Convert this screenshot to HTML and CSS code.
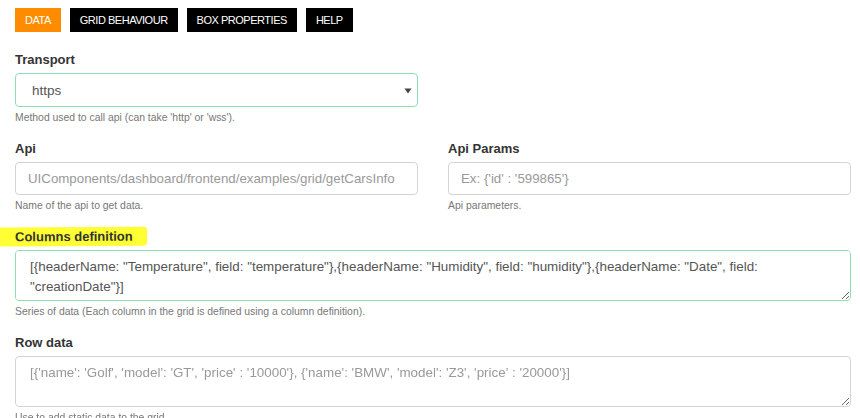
FILE: index.html
```html
<!DOCTYPE html>
<html>
<head>
<meta charset="utf-8">
<link rel="stylesheet" href="styles.css">
</head>
<body>
<div class="page">
  <nav class="tabs">
    <span class="tab tab-active">DATA</span>
    <span class="tab">GRID BEHAVIOUR</span>
    <span class="tab">BOX PROPERTIES</span>
    <span class="tab">HELP</span>
  </nav>

  <div class="group">
    <div class="label">Transport</div>
    <div class="control select focus">
      <span>https</span>
      <svg class="caret" width="8" height="6" viewBox="0 0 8 6"><path d="M0.5 0.5 H7.5 L4 5.5 Z" fill="#444"/></svg>
    </div>
    <div class="help">Method used to call api (can take 'http' or 'wss').</div>
  </div>

  <div class="row">
    <div class="group">
      <div class="label">Api</div>
      <input class="control" type="text" placeholder="UIComponents/dashboard/frontend/examples/grid/getCarsInfo">
      <div class="help">Name of the api to get data.</div>
    </div>
    <div class="group">
      <div class="label">Api Params</div>
      <input class="control" type="text" placeholder="Ex: {'id' : '599865'}">
      <div class="help">Api parameters.</div>
    </div>
  </div>

  <div class="group">
    <div class="label"><span class="marker">Columns definition</span></div>
    <textarea class="control area focus">[{headerName: "Temperature", field: "temperature"},{headerName: "Humidity", field: "humidity"},{headerName: "Date", field: "creationDate"}]</textarea>
    <div class="help">Series of data (Each column in the grid is defined using a column definition).</div>
  </div>

  <div class="group">
    <div class="label">Row data</div>
    <textarea class="control area" placeholder="[{'name': 'Golf', 'model': 'GT', 'price' : '10000'}, {'name': 'BMW', 'model': 'Z3', 'price' : '20000'}]"></textarea>
    <div class="help">Use to add static data to the grid.</div>
  </div>
</div>
</body>
</html>
```

FILE: styles.css
```css
* { box-sizing: border-box; }
html, body { margin: 0; padding: 0; background: #fff; overflow: hidden; }
body {
  font-family: "Liberation Sans", Arial, sans-serif;
  color: #333;
}
.page {
  width: 836px;
  margin-left: 15px;
  padding-top: 8px;
}
.tabs {
  display: flex;
  gap: 9px;
  margin-bottom: 18px;
}
.tab {
  height: 24px;
  line-height: 24px;
  padding: 0 10px;
  background: #000;
  color: #fff;
  font-size: 11px;
  letter-spacing: -0.48px;
}
.tab-active { background: #ff8c00; }

.group {
  display: flex;
  flex-direction: column;
  margin-bottom: 14px;
}
.row {
  display: grid;
  grid-template-columns: 403px 403px;
  column-gap: 30px;
}
.select { width: 403px; }

.label {
  font-size: 13px;
  font-weight: bold;
  line-height: 19px;
  margin-bottom: 4px;
  color: #333;
}
.marker {
  display: inline-block;
  margin-left: -15px;
  padding: 0 14px 0 15px;
  background: #ffff33;
  border-radius: 0 3px 4px 0;
  transform: rotate(-0.3deg);
}
.control {
  height: 33px;
  border: 1px solid #d4d4d4;
  border-radius: 4px;
  font-family: "Liberation Sans", Arial, sans-serif;
  font-size: 13.3px;
  color: #555;
  padding: 0 12px;
  outline: none;
  background: #fff;
}
.control::placeholder { color: #999; }
.focus { border-color: #8bdfb3; }
.select {
  display: flex;
  align-items: center;
  justify-content: space-between;
  padding: 0 5px 0 16px;
  height: 34px;
  font-size: 13.5px;
}
.caret { margin-top: 1px; }
.area {
  width: 836px;
  height: 51px;
  padding: 6px 14px;
  line-height: 20px;
  font-size: 13.4px;
  resize: vertical;
}
.help {
  font-size: 10.4px;
  line-height: 14px;
  color: #777;
  margin-top: 4px;
}
```
